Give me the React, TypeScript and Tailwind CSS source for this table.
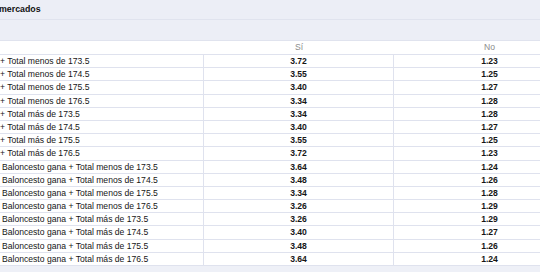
const ROWS: [string, string, string, boolean][] = [
  ['+ Total menos de 173.5', '3.72', '1.23', false],
  ['+ Total menos de 174.5', '3.55', '1.25', false],
  ['+ Total menos de 175.5', '3.40', '1.27', false],
  ['+ Total menos de 176.5', '3.34', '1.28', false],
  ['+ Total más de 173.5', '3.34', '1.28', false],
  ['+ Total más de 174.5', '3.40', '1.27', false],
  ['+ Total más de 175.5', '3.55', '1.25', false],
  ['+ Total más de 176.5', '3.72', '1.23', false],
  ['Baloncesto gana + Total menos de 173.5', '3.64', '1.24', true],
  ['Baloncesto gana + Total menos de 174.5', '3.48', '1.26', true],
  ['Baloncesto gana + Total menos de 175.5', '3.34', '1.28', true],
  ['Baloncesto gana + Total menos de 176.5', '3.26', '1.29', true],
  ['Baloncesto gana + Total más de 173.5', '3.26', '1.29', true],
  ['Baloncesto gana + Total más de 174.5', '3.40', '1.27', true],
  ['Baloncesto gana + Total más de 175.5', '3.48', '1.26', true],
  ['Baloncesto gana + Total más de 176.5', '3.64', '1.24', true],
];

export default function App() {
  return (
    <div className="w-[540px] h-[272px] overflow-hidden bg-[#eef0f7] font-['Liberation_Sans',Arial,sans-serif] text-[8.6px] text-[#161616]">
      <div className="w-[585px]">
        <div className="h-[20px] flex items-center border-b border-[#e0e3ee] bg-[#eceef6]">
          <span className="-ml-[1px] font-bold text-[8.8px] text-[#111]">mercados</span>
        </div>
        <div className="h-[21px] border-b border-[#e0e3ee] bg-[#eceef6]" />
        <div className="bg-white">
          <div className="grid grid-cols-[204px_190px_191px] h-[14px] border-b border-[#dfe2ee] items-center text-[#8c8c8c]">
            <div />
            <div className="text-center">Sí</div>
            <div className="text-center">No</div>
          </div>
          {ROWS.map(([label, si, no, team]) => (
            <div
              key={label}
              className="grid grid-cols-[204px_190px_191px] h-[13.2px] border-b border-[#dfe2ee] items-center"
            >
              <div className={`h-full flex items-center border-r border-[#dfe2ee] ${team ? 'pl-[2px]' : ''}`}>
                {label}
              </div>
              <div className="h-full flex items-center justify-center border-r border-[#dfe2ee] font-bold">{si}</div>
              <div className="h-full flex items-center justify-center font-bold">{no}</div>
            </div>
          ))}
        </div>
      </div>
    </div>
  );
}
